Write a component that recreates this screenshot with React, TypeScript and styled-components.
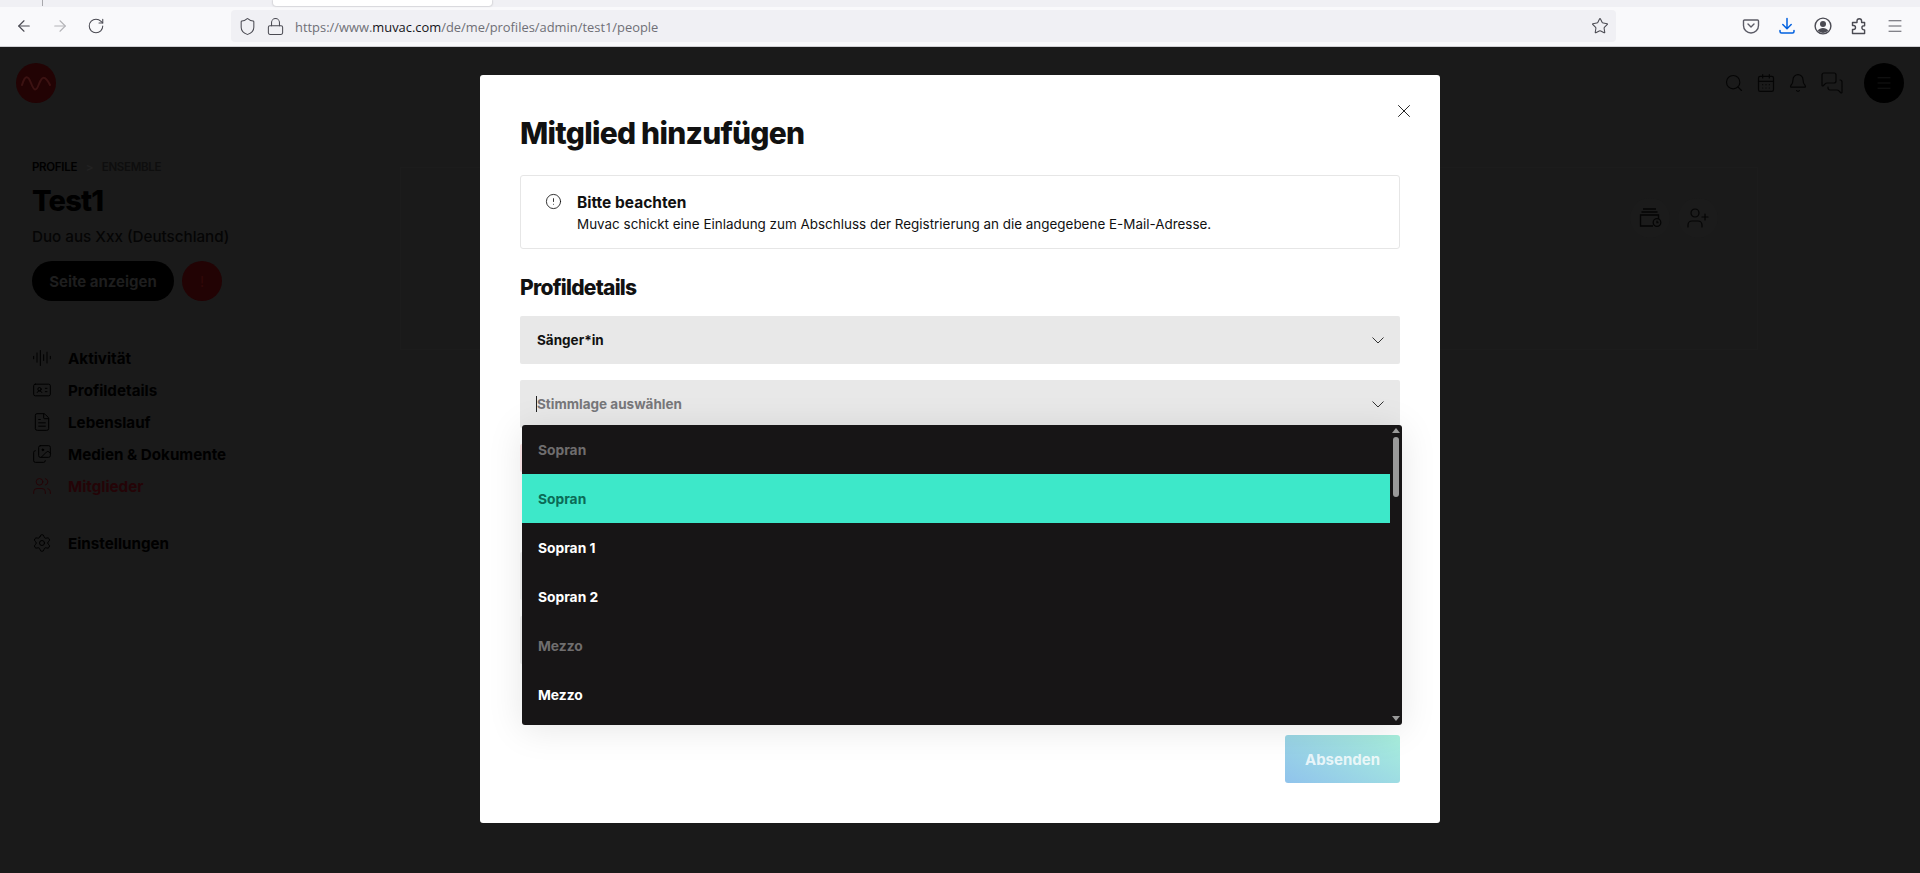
import * as React from 'react';
import styled, { createGlobalStyle } from 'styled-components';
import {
  ArrowLeft,
  ArrowRight,
  RotateCw,
  Shield,
  Lock,
  Star,
  Menu,
  Search,
  CalendarDays,
  Bell,
  MessagesSquare,
  AudioLines,
  IdCard,
  FileText,
  Images,
  Users,
  Settings,
  UserPlus,
  X,
  CircleAlert,
} from 'lucide-react';

const GlobalStyle = createGlobalStyle`
  html, body {
    margin: 0;
    height: 873px;
    overflow: hidden;
    background: #1a1a1a;
    font-family: Inter, "Liberation Sans", sans-serif;
  }
  * { box-sizing: border-box; }
`;

const navItems = [
  { label: 'Aktivität', icon: AudioLines },
  { label: 'Profildetails', icon: IdCard },
  { label: 'Lebenslauf', icon: FileText },
  { label: 'Medien & Dokumente', icon: Images },
  { label: 'Mitglieder', icon: Users, active: true },
];

const options = [
  { label: 'Sopran', kind: 'group' },
  { label: 'Sopran', kind: 'hover' },
  { label: 'Sopran 1', kind: 'item' },
  { label: 'Sopran 2', kind: 'item' },
  { label: 'Mezzo', kind: 'group' },
  { label: 'Mezzo', kind: 'item' },
];

function PocketIcon() {
  return (
    <svg width="18" height="18" viewBox="0 0 18 18" fill="none" stroke="#5b5b66" strokeWidth="1.4">
      <path d="M2.5 3h13c.6 0 1 .4 1 1v4.5a7.5 7.5 0 0 1-15 0V4c0-.6.4-1 1-1z" />
      <path d="M6 7l3 3 3-3" strokeLinecap="round" strokeLinejoin="round" />
    </svg>
  );
}

function DownloadIcon() {
  return (
    <svg width="18" height="18" viewBox="0 0 18 18" fill="none" stroke="#0060df" strokeWidth="1.5" strokeLinecap="round" strokeLinejoin="round">
      <path d="M9 1.5v10M4.8 7.5L9 11.7l4.2-4.2" />
      <path d="M2 13.5v1c0 .8.6 1.5 1.5 1.5h11c.9 0 1.5-.7 1.5-1.5v-1" />
    </svg>
  );
}

function AccountIcon() {
  return (
    <svg width="18" height="18" viewBox="0 0 18 18" fill="#4a4a52">
      <circle cx="9" cy="9" r="7.9" fill="none" stroke="#4a4a52" strokeWidth="1.4" />
      <circle cx="9" cy="7" r="3" />
      <path d="M3.8 13.6c1-1.7 3-2.6 5.2-2.6s4.200.9 5.200 2.600A7 7 0 0 1 9 16a7 7 0 0 1-5.200-2.400z" />
    </svg>
  );
}

function PuzzleIcon() {
  return (
    <svg width="18" height="18" viewBox="0 0 18 18" fill="none" stroke="#4a4a52" strokeWidth="1.4" strokeLinejoin="round">
      <path d="M2.500 16.500V12.500h1a2 2 0 0 0 0-4h-1V5.500h4.500V4a2.300 2.300 0 0 1 4.600 0v1.500h3v3.200h-.6a2.100 2.100 0 0 0 0 4.200h.6v3.600z" />
    </svg>
  );
}

function WalletClockIcon() {
  return (
    <svg width="24" height="24" viewBox="0 0 24 24" fill="none" stroke="#050505" strokeWidth="1.300">
      <path d="M5 3h13M3.500 6h16" />
      <path d="M15 20H2.500V9h18v4" />
      <circle cx="19" cy="16.500" r="3.800" />
      <path d="M19 14.800v1.700h1.500" />
    </svg>
  );
}

function LogoWave() {
  return (
    <svg width="32" height="20" viewBox="0 0 32 20" fill="none" stroke="#3c1212" strokeWidth="2" strokeLinecap="round">
      <path d="M2 12C5 2 8 2 11 10s5 9 8 1 6-9 11 1" />
    </svg>
  );
}

function Chevron() {
  return (
    <svg width="12" height="7" viewBox="0 0 12 7" fill="none" stroke="#333" strokeWidth="1">
      <path d="M.5.5L6 6 11.500.5" />
    </svg>
  );
}

export default function App() {
  return (
    <>
      <GlobalStyle />
      <TabStrip>
        <TabSeparator />
        <ActiveTab />
      </TabStrip>
      <Toolbar>
        <ToolButton><ArrowLeft size={18} strokeWidth={1.5} color="#4a4a52" /></ToolButton>
        <ToolButton><ArrowRight size={18} strokeWidth={1.5} color="#b4b4b8" /></ToolButton>
        <ToolButton><RotateCw size={18} strokeWidth={1.4} color="#4a4a52" /></ToolButton>
        <UrlBar>
          <Shield size={19} strokeWidth={1.3} color="#4a4a52" />
          <Lock size={19} strokeWidth={1.3} color="#4a4a52" />
          <UrlText>
            https://www.<UrlHost>muvac.com</UrlHost>/de/me/profiles/admin/test1/people
          </UrlText>
          <UrlStar><Star size={18} strokeWidth={1.4} color="#4a4a52" /></UrlStar>
        </UrlBar>
        <ToolGroup>
          <ToolButton><PocketIcon /></ToolButton>
          <ToolButton><DownloadIcon /></ToolButton>
          <ToolButton><AccountIcon /></ToolButton>
          <ToolButton><PuzzleIcon /></ToolButton>
          <ToolButton><Menu size={18} strokeWidth={1.2} color="#4a4a52" /></ToolButton>
        </ToolGroup>
      </Toolbar>

      <Page>
        <Header>
          <Logo><LogoWave /></Logo>
          <HeaderIcons>
            <Search size={20} strokeWidth={1.4} />
            <CalendarDays size={20} strokeWidth={1.4} />
            <Bell size={20} strokeWidth={1.4} />
            <MessagesSquare size={24} strokeWidth={1.2} />
          </HeaderIcons>
          <MenuCircle><Menu size={18} strokeWidth={1} color="#1c1c1c" /></MenuCircle>
        </Header>

        <Content>
          <Sidebar>
            <Breadcrumb>
              PROFILE <BreadcrumbSep>&gt;</BreadcrumbSep> <BreadcrumbLeaf>ENSEMBLE</BreadcrumbLeaf>
            </Breadcrumb>
            <ProfileName>Test1</ProfileName>
            <ProfileMeta>Duo aus Xxx (Deutschland)</ProfileMeta>
            <ProfileActions>
              <ViewButton>Seite anzeigen</ViewButton>
              <AlertCircle>!</AlertCircle>
            </ProfileActions>
            <NavList>
              {navItems.map((item) => (
                <NavRow key={item.label} $active={item.active}>
                  <item.icon size={20} strokeWidth={1.2} />
                  {item.label}
                </NavRow>
              ))}
            </NavList>
            <SettingsRow>
              <Settings size={20} strokeWidth={1.2} />
              Einstellungen
            </SettingsRow>
          </Sidebar>
          <Card>
            <CardButton><WalletClockIcon /></CardButton>
            <CardButton><UserPlus size={24} strokeWidth={1.2} /></CardButton>
          </Card>
        </Content>

        <Overlay>
          <Modal>
            <CloseButton><X size={22} strokeWidth={1} color="#111" /></CloseButton>
            <ModalTitle>Mitglied hinzufügen</ModalTitle>
            <Notice>
              <NoticeIcon><CircleAlert size={17} strokeWidth={1.2} color="#111" /></NoticeIcon>
              <div>
                <NoticeTitle>Bitte beachten</NoticeTitle>
                <NoticeText>
                  Muvac schickt eine Einladung zum Abschluss der Registrierung an die angegebene E-Mail-Adresse.
                </NoticeText>
              </div>
            </Notice>
            <SectionTitle>Profildetails</SectionTitle>
            <FieldStack>
              <SelectField>
                <SelectValue>Sänger*in</SelectValue>
                <Chevron />
              </SelectField>
              <SelectField>
                <Placeholder>Stimmlage auswählen</Placeholder>
                <Chevron />
                <Dropdown>
                  <OptionList>
                    {options.map((o, i) => (
                      <OptionRow key={i} $kind={o.kind}>{o.label}</OptionRow>
                    ))}
                  </OptionList>
                  <ScrollTrack>
                    <ArrowUp />
                    <ScrollThumb />
                    <ArrowDown />
                  </ScrollTrack>
                </Dropdown>
              </SelectField>
              <ErrorStub />
              <GreyStub />
              <GreyStub />
            </FieldStack>
            <SubmitRow>
              <SubmitButton>Absenden</SubmitButton>
            </SubmitRow>
          </Modal>
        </Overlay>
      </Page>
    </>
  );
}

const TabStrip = styled.div`
  height: 7px;
  background: #f0f0f4;
  display: flex;
  align-items: flex-start;
`;

const TabSeparator = styled.div`
  width: 1px;
  height: 6px;
  margin-left: 42px;
  background: #a8a8ac;
`;

const ActiveTab = styled.div`
  width: 219px;
  height: 6px;
  margin-left: 230px;
  background: #fff;
  border-radius: 0 0 3px 3px;
  box-shadow: 0 0 2px rgba(0, 0, 0, 0.35);
`;

const Toolbar = styled.div`
  height: 40px;
  background: #f9f9fb;
  border-bottom: 1px solid #d0d0d4;
  display: flex;
  align-items: center;
  padding: 0 7px 1px 6px;
`;

const ToolButton = styled.div`
  width: 36px;
  height: 32px;
  display: flex;
  align-items: center;
  justify-content: center;
`;

const ToolGroup = styled.div`
  display: flex;
  margin-left: auto;
`;

const UrlBar = styled.div`
  width: 1385px;
  height: 32px;
  margin-left: 117px;
  padding: 0 7px;
  background: #f0f0f4;
  border-radius: 4px;
  display: flex;
  align-items: center;
  gap: 9px;
`;

const UrlText = styled.div`
  font: 12.9px "Open Sans", sans-serif;
  color: #6f6f76;
  margin: 1px 0 0 1px;
`;

const UrlHost = styled.span`
  color: #15141a;
`;

const UrlStar = styled.div`
  display: flex;
  margin-left: auto;
`;

const Page = styled.div`
  position: relative;
  height: 826px;
  background: #1a1a1a;
  color: #000;
`;

const Header = styled.div`
  height: 72px;
  padding: 16px 16px 0;
  display: flex;
  align-items: flex-start;
`;

const Logo = styled.div`
  width: 40px;
  height: 40px;
  border-radius: 50%;
  background: #220304;
  display: flex;
  align-items: center;
  justify-content: center;
`;

const HeaderIcons = styled.div`
  margin-left: auto;
  height: 40px;
  display: flex;
  align-items: center;
  gap: 12px;
  color: #050505;
`;

const MenuCircle = styled.div`
  width: 40px;
  height: 40px;
  margin-left: 20px;
  border-radius: 50%;
  background: #000;
  display: flex;
  align-items: center;
  justify-content: center;
`;

const Content = styled.div`
  display: flex;
  align-items: flex-start;
`;

const Sidebar = styled.div`
  width: 400px;
  padding: 40px 0 0 32px;
`;

const Breadcrumb = styled.div`
  font-size: 11.5px;
  line-height: 16px;
  font-weight: 600;
  letter-spacing: -0.3px;
`;

const BreadcrumbSep = styled.span`
  color: #222;
  margin: 0 6px;
`;

const BreadcrumbLeaf = styled.span`
  color: #0e0e0e;
`;

const ProfileName = styled.div`
  margin-top: 8px;
  font-size: 29px;
  line-height: 36px;
  font-weight: 800;
  letter-spacing: -0.8px;
`;

const ProfileMeta = styled.div`
  margin-top: 7px;
  font-size: 15.2px;
  line-height: 22px;
  font-weight: 500;
  color: #050505;
`;

const ProfileActions = styled.div`
  margin-top: 13px;
  display: flex;
  gap: 8px;
`;

const ViewButton = styled.div`
  width: 142px;
  height: 40px;
  border-radius: 20px;
  background: #000;
  color: #1e1e1e;
  font-size: 15px;
  font-weight: 700;
  display: flex;
  align-items: center;
  justify-content: center;
`;

const AlertCircle = styled.div`
  width: 40px;
  height: 40px;
  border-radius: 50%;
  background: #220304;
  color: #320808;
  font-size: 14px;
  display: flex;
  align-items: center;
  justify-content: center;
`;

const NavList = styled.div`
  margin-top: 41px;
  display: flex;
  flex-direction: column;
`;

const NavRow = styled.div<{ $active?: boolean }>`
  height: 32px;
  display: flex;
  align-items: center;
  gap: 16px;
  font-size: 15.2px;
  font-weight: 700;
  color: ${(p) => (p.$active ? '#240407' : '#000')};
`;

const SettingsRow = styled(NavRow)`
  margin-top: 25px;
`;

const Card = styled.div`
  flex: 1;
  height: 183px;
  margin: 48px 162px 0 0;
  padding: 30px 39px 0 0;
  border: 1px solid #1c1c1c;
  display: flex;
  justify-content: flex-end;
  align-items: flex-start;
  gap: 8px;
`;

const CardButton = styled.div`
  width: 40px;
  height: 40px;
  border-radius: 50%;
  background: #1b1b1b;
  color: #050505;
  display: flex;
  align-items: center;
  justify-content: center;
`;

const Overlay = styled.div`
  position: absolute;
  inset: 0;
  padding-top: 28px;
  display: flex;
  justify-content: center;
  align-items: flex-start;
`;

const Modal = styled.div`
  position: relative;
  width: 960px;
  height: 748px;
  padding: 40px;
  background: #fff;
  border-radius: 3px;
  color: #111;
  display: flex;
  flex-direction: column;
`;

const CloseButton = styled.div`
  position: absolute;
  top: 25px;
  right: 25px;
  display: flex;
`;

const ModalTitle = styled.h1`
  margin: 0 0 22px;
  font-size: 30px;
  line-height: 37px;
  font-weight: 800;
  letter-spacing: -0.75px;
`;

const Notice = styled.div`
  height: 74px;
  margin-top: 1px;
  padding: 16px 24px 0;
  border: 1px solid #e6e6e6;
  border-radius: 3px;
  display: flex;
  gap: 15px;
`;

const NoticeIcon = styled.div`
  margin-top: 1px;
  display: flex;
  align-items: flex-start;
`;

const NoticeTitle = styled.div`
  font-size: 15.5px;
  line-height: 21px;
  font-weight: 700;
`;

const NoticeText = styled.div`
  font-size: 13.45px;
  line-height: 22px;
  font-weight: 400;
`;

const SectionTitle = styled.h2`
  margin: 25px 0 14px;
  font-size: 21px;
  line-height: 28px;
  font-weight: 800;
  letter-spacing: -0.75px;
`;

const FieldStack = styled.div`
  display: flex;
  flex-direction: column;
  gap: 16px;
`;

const SelectField = styled.div`
  position: relative;
  height: 48px;
  padding: 0 16px 0 17px;
  background: #e8e8e8;
  border-radius: 2px;
  display: flex;
  align-items: center;
  justify-content: space-between;
`;

const SelectValue = styled.div`
  font-size: 13.5px;
  font-weight: 700;
  color: #111;
`;

const Placeholder = styled(SelectValue)`
  color: #77777a;
  border-left: 1px solid #222;
  line-height: 16px;
  margin-left: -1px;
`;

const Dropdown = styled.div`
  position: absolute;
  top: 45px;
  left: 2px;
  right: -2px;
  height: 300px;
  background: #171516;
  border-radius: 3px;
  box-shadow: 0 4px 36px rgba(0, 0, 0, 0.1);
  display: flex;
  overflow: hidden;
`;

const OptionList = styled.div`
  flex: 1;
`;

const OptionRow = styled.div<{ $kind: string }>`
  height: 49px;
  padding-left: 16px;
  font-size: 13.8px;
  font-weight: 700;
  display: flex;
  align-items: center;
  background: ${(p) => (p.$kind === 'hover' ? '#3de8c9' : 'transparent')};
  color: ${(p) => (p.$kind === 'hover' ? '#0b6b56' : p.$kind === 'group' ? '#6f6d6e' : '#fff')};
`;

const ScrollTrack = styled.div`
  width: 12px;
  padding: 3px 0 4px;
  display: flex;
  flex-direction: column;
  align-items: center;
`;

const ScrollThumb = styled.div`
  width: 6px;
  height: 60px;
  margin-top: 4px;
  border-radius: 3px;
  background: #9a9a9a;
`;

const ArrowUp = styled.div`
  width: 0;
  height: 0;
  border-left: 4px solid transparent;
  border-right: 4px solid transparent;
  border-bottom: 5px solid #9a9a9a;
`;

const ArrowDown = styled.div`
  width: 0;
  height: 0;
  margin-top: auto;
  border-left: 4px solid transparent;
  border-right: 4px solid transparent;
  border-top: 5px solid #9a9a9a;
`;

const ErrorStub = styled.div`
  height: 28px;
  background: #fde6e8;
  border-radius: 2px;
`;

const GreyStub = styled.div`
  height: 48px;
  background: #f3f3f3;
  border-radius: 2px;
  &:nth-child(4) {
    margin-top: 64px;
  }
`;

const SubmitRow = styled.div`
  margin-top: auto;
  display: flex;
  justify-content: flex-end;
`;

const SubmitButton = styled.div`
  width: 115px;
  height: 48px;
  border-radius: 3px;
  background: linear-gradient(30deg, #90c3ec 0%, #a8efdc 100%);
  color: rgba(255, 255, 255, 0.8);
  font-size: 15px;
  font-weight: 700;
  display: flex;
  align-items: center;
  justify-content: center;
`;
